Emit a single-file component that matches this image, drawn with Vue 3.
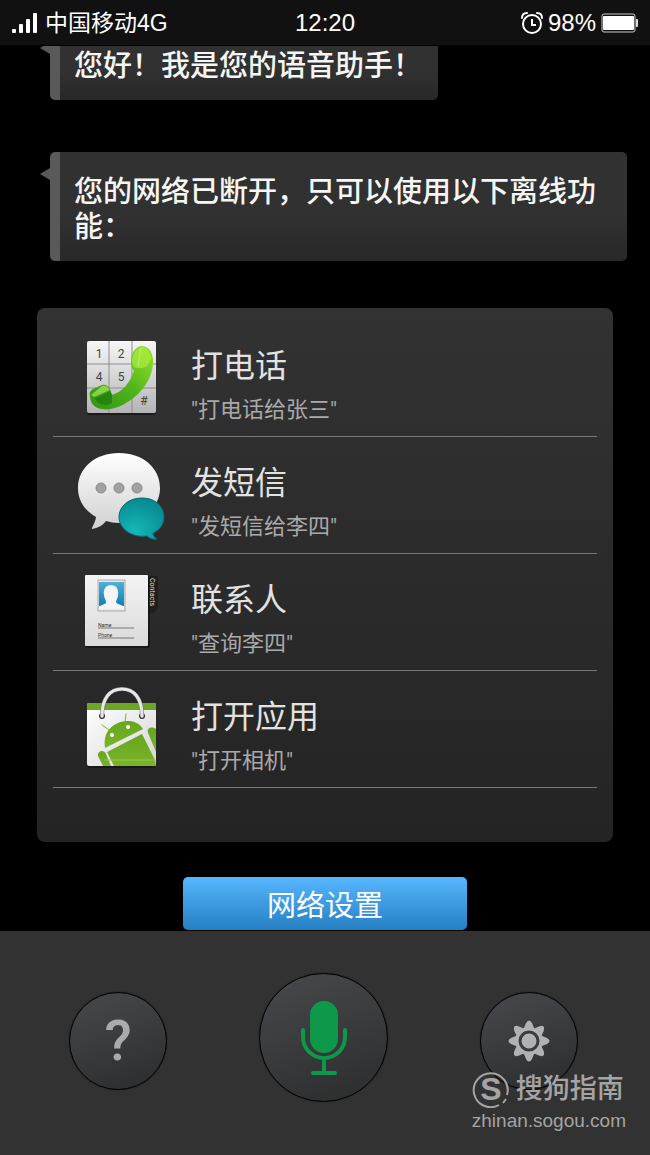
<template>
  <div class="screen">
    <header class="status-bar">
      <div class="status-left">
        <svg class="signal" width="26" height="20" viewBox="0 0 26 20">
          <rect x="0" y="16" width="4" height="4" rx="1" />
          <rect x="7" y="11" width="4" height="9" rx="1" />
          <rect x="14" y="6" width="4" height="14" rx="1" />
          <rect x="21" y="0" width="4" height="20" rx="1" />
        </svg>
        <span class="carrier">中国移动4G</span>
      </div>
      <time class="clock">12:20</time>
      <div class="status-right">
        <svg width="22" height="22" viewBox="0 0 22 22" fill="none" stroke="#fff">
          <circle cx="11" cy="12" r="9" stroke-width="2" />
          <path d="M11 7v6h4" stroke-width="2" />
          <path d="M1 6C1 3 3 1 6 1M21 6c0-3-2-5-5-5" stroke-width="2" stroke-linecap="round" />
        </svg>
        <span class="clock">98%</span>
        <svg width="37" height="20" viewBox="0 0 37 20">
          <rect x="1" y="1" width="33" height="18" rx="2" fill="none" stroke="#ccc" stroke-width="1" />
          <rect x="2" y="3" width="31" height="14" rx="1" fill="#fff" />
          <path d="M35 6h1q1 0 1 1v6q0 1-1 1h-1z" fill="#ddd" />
        </svg>
      </div>
    </header>

    <main class="chat">
      <p v-for="text in messages" :key="text" class="bubble">{{ text }}</p>

      <ul class="panel">
        <li v-for="item in features" :key="item.id" class="row">
          <svg v-if="item.id === 'call'" class="row-icon" viewBox="0 0 100 100">
            <defs>
              <linearGradient id="pad" x1="0" y1="0" x2="0" y2="1">
                <stop offset="0" stop-color="#f6f6f6" />
                <stop offset="1" stop-color="#b4b4b4" />
              </linearGradient>
              <linearGradient id="handset" x1="1" y1="0" x2="0" y2="1">
                <stop offset="0" stop-color="#9be62c" />
                <stop offset="0.5" stop-color="#4fb51b" />
                <stop offset="1" stop-color="#2f9410" />
              </linearGradient>
            </defs>
            <rect x="16" y="15" width="69" height="72" rx="2" fill="#111" opacity="0.6" />
            <rect x="16" y="13" width="69" height="72" rx="2" fill="url(#pad)" />
            <path d="M38 13v72M61 13v72M16 36h69M16 60h69" stroke="#8e8e8e" stroke-width="1" />
            <g class="pad-digits">
              <text x="28" y="30">1</text>
              <text x="50" y="30">2</text>
              <text x="28" y="53">4</text>
              <text x="50" y="53">5</text>
              <text x="73" y="53">6</text>
              <text x="50" y="77">0</text>
              <text x="73" y="77">#</text>
            </g>
            <path
              d="M60 33C60 25 65 18 71 18C77 18 81 23 82 31C83 45 76 57 67 66C55 77 42 83 31 81C23 80 19 75 19 68C18 65 19 63 22 61L31 57C34 56 38 58 39 61L41 67C51 64 59 55 63 43C61 41 60 38 60 33z"
              fill="url(#handset)"
            />
            <path d="M61 33C61 26 66 20 71 19C76 19 79 24 80 31L76 38C71 41 65 41 62 38z" fill="#b4f04a" opacity="0.6" />
            <path d="M67 38L70 20" stroke="#d2f890" stroke-width="1" opacity="0.6" />
            <path d="M20 67L31 58C35 57 38 59 39 63L25 70z" fill="#a2e85a" opacity="0.7" />
            <path d="M23 69L39 62L41 67L41 75C34 79 27 77 23 69z" fill="#17720d" opacity="0.6" />
          </svg>

          <svg v-else-if="item.id === 'sms'" class="row-icon" viewBox="0 0 100 100">
            <defs>
              <linearGradient id="talk" x1="0" y1="0" x2="0" y2="1">
                <stop offset="0" stop-color="#fff" />
                <stop offset="1" stop-color="#d0d0d0" />
              </linearGradient>
              <radialGradient id="teal" cx="0.35" cy="0.8" r="0.8">
                <stop offset="0" stop-color="#16b8b9" />
                <stop offset="1" stop-color="#078a8f" />
              </radialGradient>
            </defs>
            <path
              d="M48 8C72 8 89 23 89 43C89 63 71 78 48 78C43 78 39 77 35 76C31 81 27 83 21 84C20 83 24 79 25 72C13 65 7 55 7 43C7 23 24 8 48 8z"
              fill="url(#talk)"
            />
            <g fill="#a2a2a2" stroke="#8a8a8a" stroke-width="1">
              <circle cx="30" cy="43" r="5" />
              <circle cx="48" cy="43" r="5" />
              <circle cx="66" cy="43" r="5" />
            </g>
            <path
              d="M71 53C84 53 93 61 93 72C93 79 89 85 82 88C82 91 84 93 86 94C82 95 78 93 76 91C61 93 48 84 48 72C48 61 58 53 71 53z"
              fill="url(#teal)"
              stroke="#0a6a70"
              stroke-width="1"
            />
          </svg>

          <svg v-else-if="item.id === 'contacts'" class="row-icon" viewBox="0 0 100 100">
            <defs>
              <linearGradient id="card" x1="0" y1="0" x2="0" y2="1">
                <stop offset="0" stop-color="#f4f4f4" />
                <stop offset="1" stop-color="#dadada" />
              </linearGradient>
              <linearGradient id="photo" x1="0" y1="0" x2="0" y2="1">
                <stop offset="0" stop-color="#4fb0da" />
                <stop offset="1" stop-color="#0d7fb8" />
              </linearGradient>
            </defs>
            <path d="M77 14h8q2 0 2 2v30l-4 5h-6z" fill="#1f1f1f" />
            <rect x="15" y="15" width="64" height="71" rx="1" fill="#111" opacity="0.7" />
            <rect x="14" y="13" width="63" height="71" rx="1" fill="url(#card)" />
            <rect x="27" y="18" width="27" height="31" fill="#e8e8e8" stroke="#aaa" stroke-width="1" />
            <rect x="28" y="20" width="25" height="24" fill="url(#photo)" />
            <path
              d="M40 23C45 23 48 27 47 33C47 36 45 38 45 40C46 43 51 42 53 45V47H28V45C30 42 35 43 35 40C35 38 33 36 33 33C32 27 35 23 40 23z"
              fill="#f5f5f5"
            />
            <path d="M27 66h36M27 76h36" stroke="#777" stroke-width="1" />
            <g class="card-labels">
              <text x="27" y="65">Name</text>
              <text x="27" y="75">Phone</text>
            </g>
            <text class="card-tab" transform="translate(79 16) rotate(90)">Contacts</text>
          </svg>

          <svg v-else class="row-icon" viewBox="0 0 100 100">
            <defs>
              <linearGradient id="bag" x1="0" y1="0" x2="1" y2="1">
                <stop offset="0" stop-color="#fff" />
                <stop offset="1" stop-color="#d6d6d6" />
              </linearGradient>
              <linearGradient id="droid" x1="0" y1="0" x2="0" y2="1">
                <stop offset="0" stop-color="#67a51f" />
                <stop offset="1" stop-color="#79b52a" />
              </linearGradient>
            </defs>
            <rect x="16" y="26" width="69" height="63" rx="2" fill="#111" opacity="0.6" />
            <rect x="16" y="24" width="69" height="63" rx="2" fill="url(#bag)" />
            <path d="M16 31v-5q0-2 2-2h65q2 0 2 2v5z" fill="#6da524" />
            <g fill="url(#droid)">
              <path d="M34 69C32 57 37 48 47 44C57 40 67 42 72 50z" />
              <path d="M36 73L71 55L84 81L85 87H43z" />
              <path d="M27 77C26 72 33 70 35 75L40 87H32z" />
              <path d="M77 54C75 49 81 47 85 50V73z" />
            </g>
            <path d="M31 46l7 5M55 35l-1 9" stroke="#79b52a" stroke-width="1" stroke-linecap="round" />
            <circle cx="41" cy="56" r="2" fill="#fff" />
            <circle cx="57" cy="48" r="2" fill="#fff" />
            <path d="M33 81h51" stroke="#91c653" stroke-width="1" />
            <circle cx="31" cy="37" r="3" fill="#333" />
            <circle cx="71" cy="37" r="3" fill="#333" />
            <path d="M31 37C31 19 39 10 51 10C63 10 71 19 71 37" fill="none" stroke="#777" stroke-width="4" stroke-linecap="round" />
            <path d="M31 37C31 19 39 10 51 10C63 10 71 19 71 37" fill="none" stroke="#e6e6ec" stroke-width="3" stroke-linecap="round" />
          </svg>

          <div class="row-text">
            <h2>{{ item.title }}</h2>
            <p>"{{ item.example }}"</p>
          </div>
        </li>
      </ul>

      <button type="button" class="network-btn">网络设置</button>
    </main>

    <footer class="toolbar">
      <button type="button" class="round-btn" aria-label="帮助">?</button>
      <button type="button" class="round-btn mic" aria-label="语音">
        <svg width="48" height="76" viewBox="0 0 48 76" fill="none" stroke="#0d984a" stroke-width="4" stroke-linecap="round">
          <rect x="10" y="1" width="28" height="52" rx="14" fill="#0d984a" stroke="none" />
          <path d="M3 30v7a21 21 0 0 0 42 0v-7M24 59v14M13 73h22" />
        </svg>
      </button>
      <button type="button" class="round-btn" aria-label="设置">
        <svg width="42" height="42" viewBox="-21 -21 42 42">
          <path
            v-for="n in 8"
            :key="n"
            d="M-5 -13L-3 -18Q0 -23 3 -18L5 -13z"
            :transform="`rotate(${n * 45})`"
            fill="#b0b2b4"
          />
          <circle r="14" fill="#b0b2b4" />
          <circle r="9" fill="#b0b2b4" stroke="#3a3d3f" stroke-width="3" />
        </svg>
      </button>

      <div class="watermark">
        <div class="brand">
          <svg width="38" height="38" viewBox="0 0 38 38">
            <path d="M27 35A17 17 0 1 1 35 25M34 29L31 33" fill="none" stroke="#a4a4a4" stroke-width="2" />
            <text x="19" y="30" class="brand-letter">S</text>
          </svg>
          <span>搜狗指南</span>
        </div>
        <a href="#">zhinan.sogou.com</a>
      </div>
    </footer>
  </div>
</template>

<script setup>
import { ref } from "vue";

const messages = ref([
  "您好！我是您的语音助手！",
  "您的网络已断开，只可以使用以下离线功能："
]);

const features = ref([
  { id: "call", title: "打电话", example: "打电话给张三" },
  { id: "sms", title: "发短信", example: "发短信给李四" },
  { id: "contacts", title: "联系人", example: "查询李四" },
  { id: "apps", title: "打开应用", example: "打开相机" }
]);
</script>

<style>
body {
  background: #000;
}
</style>

<style scoped>
.screen {
  display: flex;
  flex-direction: column;
  height: 100vh;
  background: #000;
  color: #fff;
  font-family: Roboto, "Noto Sans CJK SC", sans-serif;
}

/* Status bar */
.status-bar {
  display: grid;
  grid-template-columns: 1fr auto 1fr;
  align-items: center;
  flex: none;
  height: 45px;
  padding: 0 12px;
  background: #111;
  border-bottom: 1px solid #000;
  font-family: "Liberation Sans", "Noto Sans CJK SC", sans-serif;
  line-height: 28px;
}

.status-left,
.status-right {
  display: flex;
  align-items: center;
}

.status-left {
  gap: 7px;
}

.status-right {
  justify-content: flex-end;
  gap: 5px;
}

.signal {
  fill: #fff;
}

.carrier {
  font-size: 23px;
}

.clock {
  font-size: 24px;
}

/* Conversation, older messages slide under the status bar */
.chat {
  display: flex;
  flex: 1;
  flex-direction: column;
  justify-content: flex-end;
  min-height: 0;
  padding-bottom: 1px;
  overflow: hidden;
}

.bubble {
  position: relative;
  flex: none;
  align-self: flex-start;
  margin: 0 23px 52px 50px;
  padding: 23px 16px 16px 14px;
  border-left: 10px solid #595959;
  border-radius: 5px;
  background: linear-gradient(#313131 60%, #282828);
  color: #f6f6f6;
  font-size: 29px;
  font-weight: 500;
  line-height: 35px;
}

.bubble + .panel {
  margin-top: -5px;
}

.bubble::before {
  content: "";
  position: absolute;
  top: 16px;
  left: -20px;
  border: 6px solid transparent;
  border-right: 10px solid #595959;
  border-left: 0;
}

.panel {
  flex: none;
  margin: 0 37px 35px;
  padding: 12px 16px 54px;
  border-radius: 8px;
  background: linear-gradient(#323232, #242424);
  list-style: none;
}

.row {
  display: flex;
  align-items: center;
  gap: 20px;
  height: 116px;
  padding-left: 18px;
  border-bottom: 1px solid #777;
}

.row-icon {
  flex: none;
  width: 100px;
  height: 100px;
}

.row-text {
  padding-top: 15px;
}

.row-text h2 {
  margin: 0;
  color: #e2e2e2;
  font-size: 32px;
  font-weight: 400;
  line-height: 48px;
}

.row-text p {
  margin: 0;
  color: #aaa;
  font-size: 22px;
  line-height: 40px;
}

.pad-digits {
  fill: #444;
  font-size: 12px;
  text-anchor: middle;
}

.card-labels {
  fill: #333;
  font-size: 5px;
}

.card-tab {
  fill: #ddd;
  font-size: 7px;
}

.network-btn {
  flex: none;
  align-self: center;
  width: 284px;
  height: 53px;
  padding: 0 0 2px;
  border: none;
  border-radius: 5px;
  background: linear-gradient(#57b6ff, #2580c2);
  color: #fff;
  font-family: inherit;
  font-size: 29px;
  cursor: pointer;
}

/* Bottom toolbar */
.toolbar {
  position: relative;
  display: flex;
  flex: none;
  align-items: flex-end;
  justify-content: space-between;
  padding: 42px 72px 53px 69px;
  background: #323232;
}

.round-btn {
  display: flex;
  align-items: center;
  justify-content: center;
  width: 98px;
  height: 98px;
  margin-bottom: 12px;
  padding: 0;
  border: 1px solid #000;
  border-radius: 50%;
  background: linear-gradient(160deg, #47494c, #2b2c2c);
  box-shadow: 0 0 1px #000;
  color: #a9abad;
  font-family: Roboto, sans-serif;
  font-size: 56px;
  font-weight: 500;
  cursor: pointer;
}

.round-btn.mic {
  width: 129px;
  height: 129px;
  margin-bottom: 0;
}

.watermark {
  position: absolute;
  right: 24px;
  bottom: 21px;
  color: #a4a4a4;
}

.brand {
  display: flex;
  align-items: center;
  gap: 6px;
  font-size: 27px;
  font-weight: 500;
  line-height: 38px;
}

.brand-letter {
  fill: #a4a4a4;
  font-family: "Liberation Sans", sans-serif;
  font-size: 32px;
  font-weight: 700;
  text-anchor: middle;
}

.watermark a {
  display: block;
  color: #a4a4a4;
  font-family: "Liberation Sans", sans-serif;
  font-size: 19px;
  line-height: 26px;
  text-decoration: none;
}
</style>
